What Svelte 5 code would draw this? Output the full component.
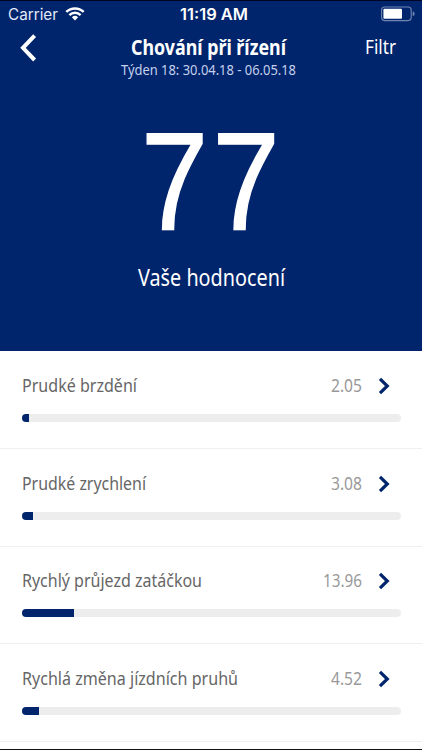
<script>
    const week = "Týden 18: 30.04.18 - 06.05.18";

    const items = [
        { name: "Prudké brzdění", length: 115, value: 2.05, valueLength: 31 },
        { name: "Prudké zrychlení", length: 124, value: 3.08, valueLength: 31 },
        { name: "Rychlý průjezd zatáčkou", length: 180, value: 13.96, valueLength: 39 },
        { name: "Rychlá změna jízdních pruhů", length: 216, value: 4.52, valueLength: 31 },
    ];
</script>

{#snippet label(text, length, height, baseline, cls)}
    <svg class="label {cls}" width={length} {height}>
        <text x="0" y={baseline} textLength={length} lengthAdjust="spacingAndGlyphs">{text}</text>
    </svg>
{/snippet}

<div class="screen">
    <header>
        <div class="status">
            <div class="carrier">
                {@render label("Carrier", 50, 20, 15.3, "system")}
                <svg class="wifi" width="20" height="14" viewBox="0 0 20 14">
                    <path d="M1.3 4.9a12.6 12.6 0 0 1 17.4 0" />
                    <path d="M4.4 8.1a8.1 8.1 0 0 1 11.2 0" />
                    <path class="dot" d="M10 13.4 6.9 10.3a4.5 4.5 0 0 1 6.2 0z" />
                </svg>
            </div>
            {@render label("11:19 AM", 68, 20, 15.3, "system clock")}
            <svg class="battery" width="34" height="16" viewBox="0 0 34 16">
                <rect class="case" x="0.6" y="1" width="29.6" height="13.6" rx="3" />
                <rect class="charge" x="2.4" y="2.8" width="18.6" height="10" rx="1" />
                <path class="cap" d="M31.7 5.3q2 .7 2 2.5t-2 2.5z" />
            </svg>
        </div>

        <nav>
            <button class="back" aria-label="Zpět">
                <svg width="17" height="28" viewBox="0 0 17 28">
                    <path d="M14.6 1.6 3 13.8 14.6 26" />
                </svg>
            </button>
            <div class="title">
                {@render label("Chování při řízení", 155, 24, 18.7, "heading")}
                {@render label(week, 175, 20, 15.2, "week")}
            </div>
            <button class="filter" aria-label="Filtr">
                {@render label("Filtr", 31, 24, 17.6, "filter-text")}
            </button>
        </nav>

        <div class="score">
            {@render label("77", 143, 130, 109.7, "number")}
            {@render label("Vaše hodnocení", 147, 32, 25.3, "caption")}
        </div>
    </header>

    <main>
        {#each items as item}
            <section class="item">
                <div class="row">
                    {@render label(item.name, item.length, 24, 17.6, "name")}
                    <div class="detail">
                        {@render label(item.value.toFixed(2), item.valueLength, 24, 17.6, "value")}
                        <svg class="chevron" width="12" height="18" viewBox="0 0 12 18">
                            <path d="M2 1.8 9.3 9 2 16.2" />
                        </svg>
                    </div>
                </div>
                <div class="track">
                    <div class="fill" style="width: {item.value}%"></div>
                </div>
            </section>
        {/each}
    </main>
</div>

<style>
    :global(body) {
        margin: 0;
        background: #fff;
    }

    .screen {
        box-sizing: border-box;
        width: 422px;
        height: 750px;
        overflow: hidden;
        border-top: 1px solid #000524;
        border-bottom: 1px solid #111;
        background: #fff;
        font-family: "Noto Sans", "Open Sans", sans-serif;
    }

    svg {
        display: block;
        flex: none;
    }

    .label {
        overflow: visible;
        fill: #fff;
    }

    button {
        padding: 0;
        border: 0;
        background: none;
        font: inherit;
        cursor: pointer;
    }

    header {
        box-sizing: border-box;
        height: 350px;
        background: #00256c;
    }

    .status {
        display: grid;
        grid-template-columns: 1fr auto 1fr;
        align-items: start;
        height: 29px;
        box-sizing: border-box;
        padding: 4px 7px 0 12px;
    }

    .system {
        font-family: Inter, "Liberation Sans", sans-serif;
        font-size: 15.3px;
        fill: #e3eafa;
    }

    .clock {
        font-weight: 600;
        fill: #fff;
    }

    .carrier {
        display: flex;
        gap: 7px;
        margin-left: -4px;
    }

    .wifi {
        margin-top: 2px;
        fill: none;
        stroke: #fff;
        stroke-width: 2.5;
    }

    .wifi .dot {
        fill: #fff;
        stroke: none;
    }

    .battery {
        justify-self: end;
        margin-top: 1px;
    }

    .case {
        fill: none;
        stroke: #6f86b3;
        stroke-width: 1.1;
    }

    .charge {
        fill: #fff;
    }

    .cap {
        fill: #6f86b3;
    }

    nav {
        display: grid;
        grid-template-columns: 1fr auto 1fr;
        align-items: start;
        height: 66px;
        padding: 0 26px 0 20px;
    }

    .back {
        justify-self: start;
        padding-top: 4px;
    }

    .back path {
        fill: none;
        stroke: #fff;
        stroke-width: 4;
    }

    .title {
        display: flex;
        flex-direction: column;
        align-items: center;
        padding-top: 6px;
    }

    .heading {
        font-size: 20.5px;
        font-weight: 700;
    }

    .week {
        font-size: 14.8px;
        fill: #c4d0ec;
    }

    .filter {
        justify-self: end;
        padding-top: 6px;
    }

    .filter-text {
        font-size: 19.8px;
    }

    .score {
        display: flex;
        flex-direction: column;
        align-items: center;
        gap: 12px;
        padding-top: 23px;
    }

    .number {
        margin-left: 2px;
        font-family: "Liberation Sans", Arial, sans-serif;
        font-size: 139px;
        letter-spacing: 5px;
        stroke: #fff;
        stroke-width: 1.4;
    }

    .caption {
        font-size: 22.8px;
    }

    main {
        padding-top: 0.6px;
    }

    .item {
        box-sizing: border-box;
        height: 97.6px;
        padding: 22.4px 21.5px 0;
        border-bottom: 1px solid #efefef;
    }

    .row {
        display: flex;
        justify-content: space-between;
        align-items: center;
        padding: 0 10.5px 0 0.8px;
    }

    .name {
        font-size: 18px;
        fill: #666;
    }

    .detail {
        display: flex;
        align-items: center;
        gap: 16px;
    }

    .value {
        font-size: 17.2px;
        fill: #999;
    }

    .chevron path {
        fill: none;
        stroke: #00256c;
        stroke-width: 3.2;
    }

    .track {
        height: 8px;
        margin-top: 16px;
        overflow: hidden;
        border-radius: 4px;
        background: #ededed;
    }

    .fill {
        height: 100%;
        background: #00256c;
    }
</style>
